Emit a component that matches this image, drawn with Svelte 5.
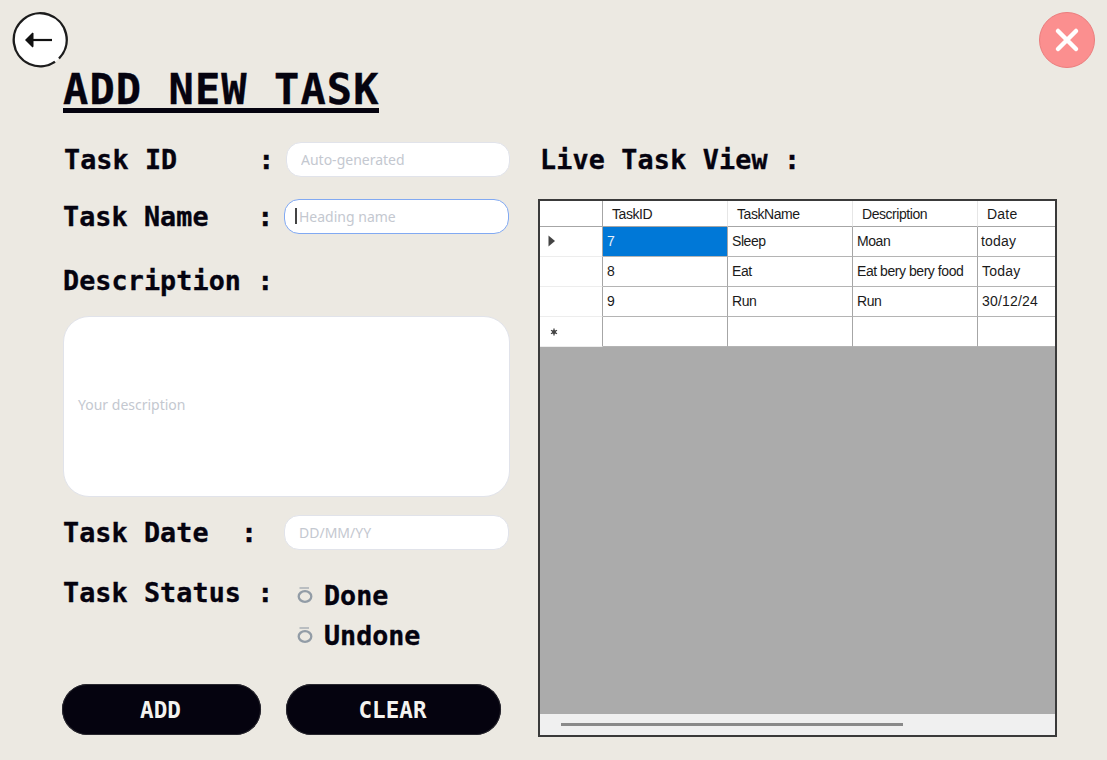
<script>
  const columns = [
    { name: 'TaskID' },
    { name: 'TaskName' },
    { name: 'Description' },
    { name: 'Date' }
  ];
  const rows = [
    ['7', 'Sleep', 'Moan', 'today'],
    ['8', 'Eat', 'Eat bery bery food', 'Today'],
    ['9', 'Run', 'Run', '30/12/24']
  ];
</script>

<div class="page">
  <header class="top">
    <button class="back" aria-label="Back">
      <svg width="56" height="56" viewBox="0 0 56 56">
        <circle cx="28" cy="28" r="26.5" fill="#fff" />
        <path d="M43 49.8A26.5 26.5 0 1 1 47 46.5" fill="none" stroke="#1c1c1c" stroke-width="2.400" />
        <path d="M16 28H40" stroke="#111" stroke-width="2.200" />
        <path d="M13 28L20.500 20.500L21.500 21.500V34.500L20.500 35.500Z" fill="#111" />
      </svg>
    </button>
    <button class="close" aria-label="Close">
      <svg width="56" height="56" viewBox="0 0 56 56">
        <circle cx="28" cy="28" r="27.500" fill="#fb8f8f" stroke="#ea7d7d" />
        <path d="M19 19L37 37M37 19L19 37" stroke="#fff" stroke-width="4.500" stroke-linecap="round" />
      </svg>
    </button>
  </header>

  <h1>ADD NEW TASK</h1>

  <main class="columns">
    <section class="form">
      <div class="row">
        <span class="label id">{'Task ID     :'}</span>
        <input class="field first" placeholder="Auto-generated" />
      </div>

      <div class="row">
        <span class="label">{'Task Name   :'}</span>
        <div class="focus-wrap">
          <input class="field focused" placeholder="Heading name" />
          <span class="caret"></span>
        </div>
      </div>

      <div class="row desc-label">
        <span class="label">Description :</span>
      </div>

      <textarea class="desc" placeholder="Your description"></textarea>

      <div class="row date-row">
        <span class="label">{'Task Date  :'}</span>
        <input class="field" placeholder="DD/MM/YY" />
      </div>

      <div class="status">
        <span class="label status-label">Task Status :</span>
        <div class="radios">
          {#each ['Done', 'Undone'] as option}
            <label class="radio">
              <svg width="16" height="16" viewBox="0 0 16 16">
                <path d="M2.500 1H12" stroke="#a0a8af" stroke-width="1.300" />
                <ellipse cx="8" cy="9.500" rx="6.300" ry="5.300" fill="none" stroke="#929ca6" stroke-width="2.300" />
              </svg>
              <span>{option}</span>
            </label>
          {/each}
        </div>
      </div>

      <div class="actions">
        <button class="btn add">ADD</button>
        <button class="btn clear">CLEAR</button>
      </div>
    </section>

    <section class="live">
      <h2>Live Task View :</h2>
      <div class="grid">
        <table>
          <colgroup>
            <col class="c0" /><col class="c1" /><col class="c1" /><col class="c1" /><col class="c2" />
          </colgroup>
          <thead>
            <tr>
              <th class="corner"></th>
              {#each columns as col}
                <th>{col.name}</th>
              {/each}
            </tr>
          </thead>
          <tbody>
            {#each rows as row, r}
              <tr>
                <td class="head">
                  {#if r === 0}
                    <svg class="arrow" width="8" height="12" viewBox="0 0 8 12"><path d="M0.500 0.500L7 6L0.500 11.500Z" fill="#444" /></svg>
                  {/if}
                </td>
                {#each row as cell, c}
                  <td class:selected={r === 0 && c === 0} class:tight={r === 0 && c === 3}>{cell}</td>
                {/each}
              </tr>
            {/each}
            <tr>
              <td class="head">
                <svg class="star" width="8" height="8" viewBox="0 0 8 8"><path d="M4 0.500V7.500M1 2.200L7 5.800M7 2.200L1 5.800" stroke="#444" stroke-width="1.300" /><circle cx="4" cy="4" r="2" fill="#444" /></svg>
              </td>
              <td></td><td></td><td></td><td></td>
            </tr>
          </tbody>
        </table>
        <div class="fill"></div>
        <div class="hscroll"><div class="thumb"></div></div>
      </div>
    </section>
  </main>
</div>

<style>
  :global(body) {
    margin: 0;
    background: #ece9e2;
  }
  .page {
    box-sizing: border-box;
    width: 1107px;
    height: 760px;
    overflow: hidden;
    padding: 12px 12px 0 12px;
    background: #ece9e2;
    color: #05030f;
    font-family: "DejaVu Sans Mono", monospace;
    -webkit-text-stroke: 0.35px currentColor;
  }
  .top {
    display: flex;
    justify-content: space-between;
    height: 56px;
  }
  button {
    padding: 0;
    border: 0;
    background: none;
    font: inherit;
  }
  .back, .close {
    width: 56px;
    height: 56px;
  }
  .back svg, .close svg {
    display: block;
  }
  h1 {
    box-sizing: border-box;
    width: 316px;
    height: 45px;
    margin: 0 0 0 51px;
    border-bottom: 5px solid #05030f;
    font-size: 42px;
    font-weight: 700;
    line-height: 44px;
    letter-spacing: 1.100px;
    white-space: pre;
  }
  .columns {
    display: flex;
    gap: 27px;
    margin: 29px 0 0 51px;
  }
  .form {
    width: 448px;
    flex: none;
  }
  .row {
    display: flex;
    align-items: center;
    height: 35px;
    margin-bottom: 22px;
  }
  .label {
    flex: none;
    width: 221px;
    font-size: 26.700px;
    font-weight: 700;
    line-height: 35px;
    letter-spacing: 0.120px;
    white-space: pre;
  }
  .label.id {
    padding-left: 1px;
    width: 220px;
  }
  input, textarea {
    box-sizing: border-box;
    border: 1px solid #e1e3ea;
    background: #fff;
    outline: none;
    color: #333;
    font-family: "Noto Sans", sans-serif;
    font-size: 14px;
    -webkit-text-stroke: 0;
  }
  input::placeholder, textarea::placeholder {
    color: #c4c8d0;
    opacity: 1;
  }
  .field {
    width: 225px;
    height: 35px;
    padding: 0 14px 1px;
    border-radius: 15px;
  }
  .field.first {
    width: 224px;
    margin-left: 2px;
  }
  .focus-wrap {
    position: relative;
    width: 225px;
    height: 35px;
  }
  .field.focused {
    border: 1.500px solid #81a9f2;
    display: block;
  }
  .caret {
    position: absolute;
    left: 11px;
    top: 9px;
    width: 1.500px;
    height: 16px;
    background: #444;
  }
  .row.desc-label {
    margin: 29px 0 0;
    height: 35px;
  }
  .desc-label .label {
    width: auto;
  }
  .desc {
    display: block;
    width: 447px;
    height: 181px;
    margin-top: 18px;
    padding: 78px 14px 0;
    border-radius: 26px;
    resize: none;
    overflow: hidden;
  }
  .date-row {
    margin: 18px 0 0;
  }
  .status {
    display: flex;
    margin-top: 25px;
  }
  .radios {
    display: flex;
    flex-direction: column;
    gap: 5px;
    margin-left: 13px;
    margin-top: 3px;
  }
  .radio {
    display: flex;
    align-items: center;
    gap: 11px;
    height: 35px;
    font-size: 26.700px;
    font-weight: 700;
  }
  .radio svg {
    flex: none;
    margin-top: -2px;
  }
  .actions {
    display: flex;
    gap: 25px;
    margin: 31px 0 0 -1px;
  }
  .btn {
    height: 51px;
    padding-right: 2px;
    border-radius: 26px;
    background: #05030f;
    color: #f4f3f0;
    font-family: "DejaVu Sans Mono", monospace;
    font-size: 22.600px;
    font-weight: 700;
    -webkit-text-stroke: 0;
    box-shadow: 0 0 0 1px #29282f inset;
  }
  .add {
    width: 199px;
  }
  .clear {
    width: 215px;
  }
  .live {
    width: 519px;
    flex: none;
  }
  h2 {
    height: 35px;
    margin: 0 0 22px 2px;
    font-size: 26.700px;
    font-weight: 700;
    line-height: 35px;
    letter-spacing: 0.200px;
    white-space: pre;
  }
  .grid {
    box-sizing: border-box;
    display: flex;
    flex-direction: column;
    width: 519px;
    height: 538px;
    border: 2px solid #3a3a3a;
    background: #fff;
    font-family: "Liberation Sans", sans-serif;
    font-size: 14px;
    color: #1a1a1a;
    letter-spacing: -0.450px;
    -webkit-text-stroke: 0;
  }
  table {
    flex: none;
    width: 515px;
    table-layout: fixed;
    border-collapse: separate;
    border-spacing: 0;
  }
  .c0 { width: 63px; }
  .c1 { width: 125px; }
  .c2 { width: 77px; }
  th {
    box-sizing: border-box;
    height: 26px;
    padding: 0 0 0 9px;
    border-right: 1px solid #e6e6e6;
    border-bottom: 1px solid #a6a6a6;
    font-weight: 400;
    text-align: left;
    overflow: hidden;
  }
  th:last-child, td:last-child {
    border-right: 0;
    letter-spacing: 0.200px;
  }
  th.corner {
    border-right: 1px solid #a6a6a6;
  }
  td {
    box-sizing: border-box;
    height: 30px;
    padding: 0 0 1px 4px;
    border-right: 1px solid #a6a6a6;
    border-bottom: 1px solid #b4b4b4;
    white-space: nowrap;
    overflow: hidden;
    vertical-align: middle;
  }
  td.tight {
    padding-left: 3px;
  }
  td.head {
    padding-left: 0;
    border-bottom: 1px solid #ededed;
  }
  td.selected {
    background: #0078d7;
    color: #e6f1fb;
  }
  .arrow {
    display: block;
    margin-left: 8px;
  }
  .star {
    display: block;
    margin-left: 10px;
    margin-top: 2px;
  }
  .fill {
    flex: 1;
    background: #ababab;
  }
  .hscroll {
    flex: none;
    display: flex;
    align-items: center;
    height: 21px;
    padding-left: 21px;
    background: #f0f0f0;
  }
  .thumb {
    width: 342px;
    height: 3px;
    background: #8a8a8a;
  }
</style>
